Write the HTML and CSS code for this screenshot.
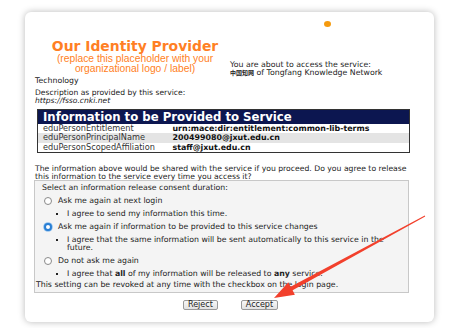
FILE: index.html
```html
<!DOCTYPE html>
<html>
<head>
<meta charset="utf-8">
<link rel="stylesheet" href="styles.css">
</head>
<body>
<div class="card">
  <div class="dotrow"><span class="dot"></span></div>
  <div class="top">
    <div class="logo">
      <div class="title">Our Identity Provider</div>
      <div class="sub">(replace this placeholder with your<br>organizational logo / label)</div>
    </div>
    <div class="svc">You are about to access the service:<br><b class="cjk">中国知网</b> of Tongfang Knowledge Network</div>
  </div>
  <p class="tech">Technology</p>
  <p class="desc">Description as provided by this service:<br><i>https://fsso.cnki.net</i></p>
  <table class="attrs">
    <colgroup><col class="ck"><col></colgroup>
    <thead><tr><th colspan="2">Information to be Provided to Service</th></tr></thead>
    <tbody>
      <tr><td class="k">eduPersonEntitlement</td><td class="v">urn:mace:dir:entitlement:common-lib-terms</td></tr>
      <tr class="alt"><td class="k">eduPersonPrincipalName</td><td class="v">200499080@jxut.edu.cn</td></tr>
      <tr><td class="k">eduPersonScopedAffiliation</td><td class="v">staff@jxut.edu.cn</td></tr>
    </tbody>
  </table>
  <p class="ask">The information above would be shared with the service if you proceed. Do you agree to release this information to the service every time you access it?</p>
  <div class="box">
    <div class="lead">Select an information release consent duration:</div>
    <div class="opt"><span class="radio"></span>Ask me again at next login</div>
    <ul class="items"><li>I agree to send my information this time.</li></ul>
    <div class="opt"><span class="radio on"></span>Ask me again if information to be provided to this service changes</div>
    <ul class="items"><li>I agree that the same information will be sent automatically to this service in the future.</li></ul>
    <div class="opt"><span class="radio"></span>Do not ask me again</div>
    <ul class="items"><li>I agree that <b>all</b> of my information will be released to <b>any</b> service.</li></ul>
    <div class="note">This setting can be revoked at any time with the checkbox on the login page.</div>
  </div>
  <div class="btns"><button class="btn">Reject</button><button class="btn">Accept</button></div>
</div>
<svg class="arrow" width="454" height="328" viewBox="0 0 454 328">
  <polygon points="274,298 288.3,282.3 290.6,286.7 424.8,215.6 425.2,216.4 292.6,290.3 294.9,294.7" fill="#f2402c"/>
</svg>
</body>
</html>
```
FILE: styles.css
```css
html, body {
  margin: 0;
  padding: 0;
  background: #ffffff;
}
body {
  width: 454px;
  height: 328px;
  overflow: hidden;
  position: relative;
  font-family: "DejaVu Sans", Verdana, sans-serif;
  color: #222;
}
.card {
  margin: 12px 0 0 25px;
  width: 409px;
  height: 310px;
  box-sizing: border-box;
  background: #fff;
  border-radius: 6px;
  box-shadow: 0 0 7px rgba(0,0,0,0.28);
  padding: 9px 0 0 10px;
}
.dotrow {
  height: 6px;
  padding-left: 289px;
}
.dot {
  display: block;
  width: 7px;
  height: 6px;
  border-radius: 50%;
  background: #f59a0e;
}
.top {
  display: flex;
  margin-top: 11px;
}
.logo {
  width: 200px;
  text-align: center;
  color: #ff7f24;
}
.title {
  font-weight: bold;
  font-size: 13.9px;
  line-height: 16px;
}
.sub {
  font-family: "Liberation Sans", Arial, sans-serif;
  font-size: 10.3px;
  line-height: 10px;
}
.svc {
  font-size: 7.8px;
  line-height: 8px;
  padding-top: 23px;
  margin-left: -5px;
  white-space: nowrap;
}
.cjk {
  font-family: "Noto Sans CJK SC", sans-serif;
  font-size: 6px;
}
.tech {
  margin: 0;
  font-size: 7.8px;
  line-height: 8px;
}
.desc {
  margin: 4px 0 0 0;
  font-size: 7.6px;
  line-height: 7.5px;
}
.attrs {
  margin: 4.5px 0 0 2px;
  width: 373px;
  table-layout: fixed;
  border-collapse: collapse;
  border: 1px solid #333;
}
.attrs col.ck {
  width: 130px;
}
.attrs th {
  background: #0c1650;
  color: #fff;
  text-align: left;
  font-size: 11.7px;
  line-height: 14px;
  padding: 0 0 0 5px;
  border: 0;
  white-space: nowrap;
}
.attrs td {
  font-size: 8.2px;
  line-height: 9.5px;
  padding: 0 0 0 5px;
  white-space: nowrap;
  overflow: hidden;
}
.attrs td.k {
  color: #333;
}
.attrs td.v {
  font-weight: bold;
  font-size: 7.9px;
  color: #111;
}
.attrs tr.alt td {
  background: #e4e4e4;
}
.ask {
  margin: 12px 0 0 0;
  font-size: 7.7px;
  line-height: 7.5px;
  width: 378px;
}
.box {
  margin: 0 0 0 -1px;
  width: 375px;
  height: 113px;
  box-sizing: border-box;
  border: 1px solid #c8c8c8;
  background: #f4f4f4;
  font-size: 7.8px;
  line-height: 8px;
  padding: 3px 0 0 7px;
}
.opt {
  display: flex;
  align-items: center;
  margin-top: 5px;
  padding-left: 2px;
}
.radio {
  width: 8px;
  height: 8px;
  border-radius: 50%;
  border: 1px solid #8a8a8a;
  background: #fff;
  box-sizing: border-box;
  margin-right: 6px;
}
.radio.on {
  border: 2.2px solid #2a7fd4;
  background: #fff;
  box-shadow: 0 0 0 0.8px #8ebfee;
}
.items {
  margin: 5px 0 0 0;
  padding-left: 25px;
  list-style: square;
  width: 328px;
}
.note {
  margin: 3px 0 0 -6px;
}
.btns {
  display: flex;
  gap: 23px;
  padding-left: 148px;
  margin-top: 7px;
}
.btn {
  font-family: "DejaVu Sans", Verdana, sans-serif;
  font-size: 8px;
  line-height: 8px;
  height: 10px;
  padding: 0 4px;
  border: 1px solid #999;
  border-radius: 2px;
  background: linear-gradient(#f8f8f8, #e2e2e2);
  color: #222;
}
.arrow {
  position: absolute;
  left: 0;
  top: 0;
  pointer-events: none;
}
```
